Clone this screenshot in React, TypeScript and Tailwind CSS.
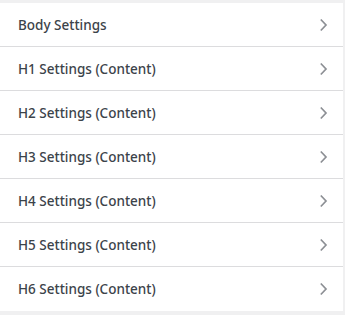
import React from 'react';

const items = [
  'Body Settings',
  'H1 Settings (Content)',
  'H2 Settings (Content)',
  'H3 Settings (Content)',
  'H4 Settings (Content)',
  'H5 Settings (Content)',
  'H6 Settings (Content)',
];

const Chevron = () => (
  <svg width="9" height="14" viewBox="0 0 9 14" fill="none" className="text-[#8c8f94]">
    <path d="M1.8 1.5L7 7L1.8 12.5" stroke="currentColor" strokeWidth="1.7" />
  </svg>
);

export default function App() {
  return (
    <div className="w-[345px] h-[315px] bg-[#f0f0f1] pt-[3px] pr-[2px] overflow-hidden" style={{ fontFamily: '"Noto Sans", "Open Sans", sans-serif' }}>
      <ul className="bg-white">
        {items.map((label, i) => (
          <li
            key={label}
            className={`flex items-center justify-between h-[44px] pl-[18px] pr-[15px] ${i < items.length - 1 ? 'border-b border-[#dcdcde]' : ''}`}
          >
            <span className="text-[13.5px] font-medium text-[#3c434a] leading-none pt-[2px]">{label}</span>
            <Chevron />
          </li>
        ))}
      </ul>
    </div>
  );
}
